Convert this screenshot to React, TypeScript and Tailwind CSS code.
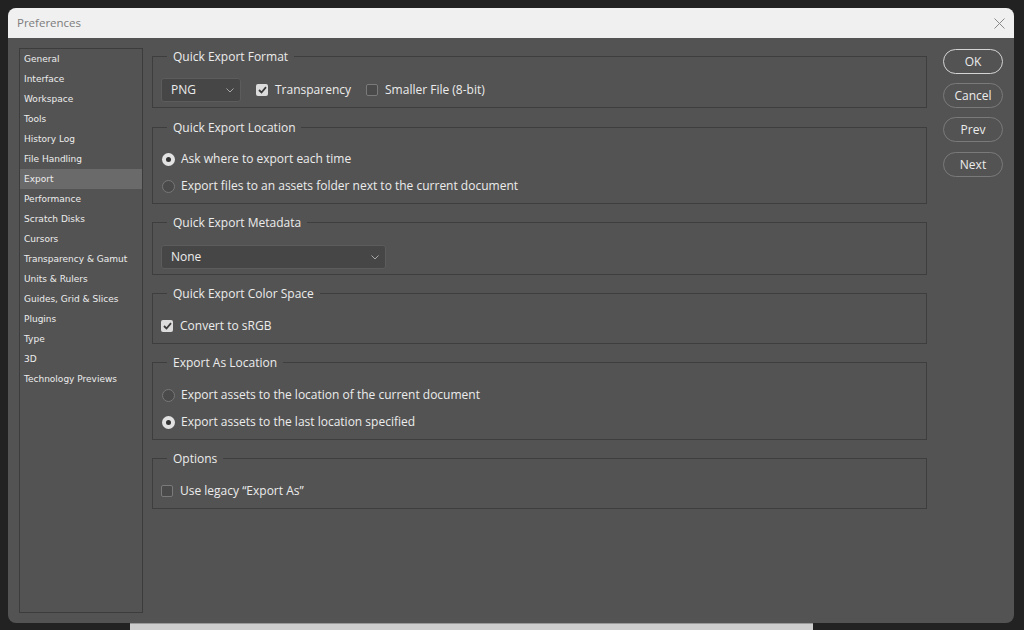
import React from "react";

const sidebarItems = [
  "General",
  "Interface",
  "Workspace",
  "Tools",
  "History Log",
  "File Handling",
  "Export",
  "Performance",
  "Scratch Disks",
  "Cursors",
  "Transparency & Gamut",
  "Units & Rulers",
  "Guides, Grid & Slices",
  "Plugins",
  "Type",
  "3D",
  "Technology Previews",
];

function Chevron() {
  return (
    <svg width="8" height="5" viewBox="0 0 8 5" className="shrink-0">
      <path d="M0.5 0.5 L4 4 L7.5 0.5" fill="none" stroke="#a8a8a8" strokeWidth="1" />
    </svg>
  );
}

function Select({ value, width }: { value: string; width: string }) {
  return (
    <div
      className={`${width} h-[24px] flex items-center justify-between pl-[9px] pr-[6px] bg-[#464646] border border-[#5c5c5c] rounded-[3px] text-[#ececec]`}
    >
      <span>{value}</span>
      <Chevron />
    </div>
  );
}

function Checkbox({ checked, label }: { checked: boolean; label: string }) {
  return (
    <div className="flex items-center h-[20px] gap-[7px]">
      {checked ? (
        <div className="w-[12px] h-[12px] rounded-[2px] bg-[#dcdcdc] flex items-center justify-center">
          <svg width="9" height="8" viewBox="0 0 9 8">
            <path d="M1 4 L3.5 6.5 L8 1.2" fill="none" stroke="#3a3a3a" strokeWidth="1.8" />
          </svg>
        </div>
      ) : (
        <div className="w-[12px] h-[12px] rounded-[2px] bg-[#4a4a4a] border border-[#7a7a7a]" />
      )}
      <span>{label}</span>
    </div>
  );
}

function Radio({ checked, label }: { checked: boolean; label: string }) {
  return (
    <div className="flex items-center h-[20px] gap-[6px] pl-[1px]">
      {checked ? (
        <div className="w-[13px] h-[13px] rounded-full bg-[#e2e2e2] flex items-center justify-center">
          <div className="w-[5px] h-[5px] rounded-full bg-[#333333]" />
        </div>
      ) : (
        <div className="w-[13px] h-[13px] rounded-full bg-[#4a4a4a] border border-[#777777]" />
      )}
      <span>{label}</span>
    </div>
  );
}

function Group({
  title,
  height,
  pt,
  children,
}: {
  title: string;
  height: string;
  pt: string;
  children: React.ReactNode;
}) {
  return (
    <div className={`relative ${height} ${pt} pl-[8px] border border-[#3e3e3e]`}>
      <span className="absolute -top-[9px] left-[14px] px-[6px] bg-[#535353] text-[12px] leading-[18px] text-[#ececec]">
        {title}
      </span>
      {children}
    </div>
  );
}

function Btn({ label, primary }: { label: string; primary?: boolean }) {
  return (
    <div
      className={`w-[60px] h-[25px] rounded-full flex items-center justify-center text-[12px] text-[#ececec] ${
        primary ? "border-[1.5px] border-[#d4d4d4]" : "border border-[#7a7a7a]"
      }`}
    >
      {label}
    </div>
  );
}

export default function App() {
  return (
    <div className="w-[1024px] h-[630px] bg-[#222222] pt-[8px] pl-[8px] overflow-hidden font-['Open_Sans',sans-serif] text-[12px] text-[#ececec]">
      <div className="w-[1006px] h-[615px] rounded-[8px] overflow-hidden bg-[#535353] flex flex-col">
        {/* Title bar */}
        <div className="h-[30px] bg-[#f0f0f0] flex items-center justify-between pl-[9px] pr-[9px] shrink-0">
          <span className="text-[11.5px] text-[#7c7c7c]">Preferences</span>
          <svg width="11" height="11" viewBox="0 0 11 11">
            <path d="M0.5 0.5 L10.5 10.5 M10.5 0.5 L0.5 10.5" stroke="#8a8a8a" strokeWidth="1" />
          </svg>
        </div>
        {/* Body */}
        <div className="flex pt-[10px] pl-[11px]">
          {/* Sidebar */}
          <div className="w-[124px] h-[565px] border border-[#3c3c3c] font-['DejaVu_Sans',sans-serif] text-[9px] text-[#ededed] flex flex-col">
            {sidebarItems.map((item) => (
              <div
                key={item}
                className={`h-[20px] flex items-center pl-[4px] pt-[2px] ${item === "Export" ? "bg-[#6a6a6a]" : ""}`}
              >
                {item}
              </div>
            ))}
          </div>
          {/* Main */}
          <div className="w-[775px] ml-[9px] pt-[8px] flex flex-col gap-[18px]">
            <div className="mb-[1px]">
              <Group title="Quick Export Format" height="h-[52px]" pt="pt-[21px]">
                <div className="flex items-center">
                  <Select value="PNG" width="w-[80px]" />
                  <div className="ml-[15px]">
                    <Checkbox checked label="Transparency" />
                  </div>
                  <div className="ml-[15px]">
                    <Checkbox checked={false} label="Smaller File (8-bit)" />
                  </div>
                </div>
              </Group>
            </div>
            <Group title="Quick Export Location" height="h-[77px]" pt="pt-[21px]">
              <div className="flex flex-col gap-[7px]">
                <Radio checked label="Ask where to export each time" />
                <Radio checked={false} label="Export files to an assets folder next to the current document" />
              </div>
            </Group>
            <Group title="Quick Export Metadata" height="h-[53px]" pt="pt-[22px]">
              <Select value="None" width="w-[225px]" />
            </Group>
            <Group title="Quick Export Color Space" height="h-[51px]" pt="pt-[22px]">
              <Checkbox checked label="Convert to sRGB" />
            </Group>
            <Group title="Export As Location" height="h-[78px]" pt="pt-[22px]">
              <div className="flex flex-col gap-[7px]">
                <Radio checked={false} label="Export assets to the location of the current document" />
                <Radio checked label="Export assets to the last location specified" />
              </div>
            </Group>
            <Group title="Options" height="h-[51px]" pt="pt-[22px]">
              <Checkbox checked={false} label={"Use legacy \u201CExport As\u201D"} />
            </Group>
          </div>
          {/* Buttons */}
          <div className="ml-[16px] pt-[1px] flex flex-col gap-[9px]">
            <Btn label="OK" primary />
            <Btn label="Cancel" />
            <Btn label="Prev" />
            <div className="mt-[1px]">
              <Btn label="Next" />
            </div>
          </div>
        </div>
      </div>
      <div className="ml-[122px] w-[683px] h-[7px] bg-[#cdcdcd] border-t border-[#9a9a9a]" />
    </div>
  );
}
